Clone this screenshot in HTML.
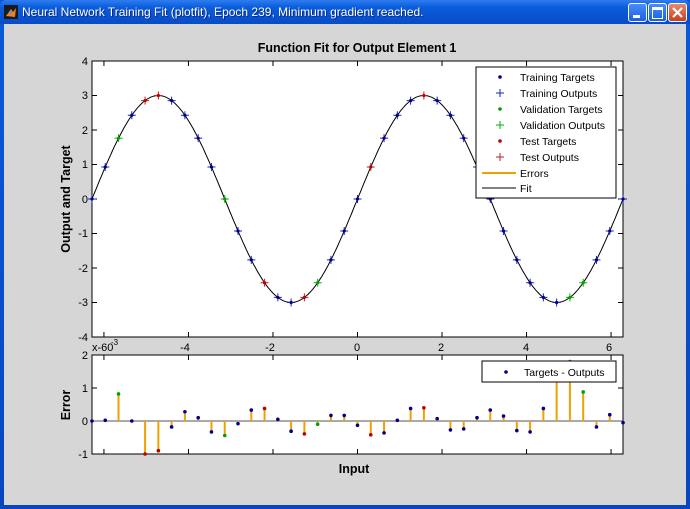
<!DOCTYPE html>
<html><head><meta charset="utf-8"><style>
html,body{margin:0;padding:0;width:690px;height:509px;overflow:hidden;background:#0b4fd0}
#win{position:absolute;left:0;top:0;width:690px;height:509px;background:linear-gradient(#0a5ad8,#0846c0)}
#tb{position:absolute;left:0;top:0;width:690px;height:24px;background:linear-gradient(#2f7cf0 0%,#0a5ddc 30%,#0853d2 70%,#0a4cc4 100%);border-radius:6px 6px 0 0}
#tt{position:absolute;left:22px;top:5px;color:#fff;font:12px "Liberation Sans",sans-serif;text-shadow:1px 1px #0a2a80}
.btn{position:absolute;top:3px;width:19px;height:19px;border:1px solid #fff;border-radius:3px;background:linear-gradient(#4a8cf8,#1a5ee8);box-sizing:border-box}
#client{position:absolute;left:4px;top:24px;width:682px;height:481px;background:#d6d6d6}
svg text{font-family:"Liberation Sans",Arial,sans-serif}
</style></head><body>
<div id="win">
<div id="tb">
<svg style="position:absolute;left:4px;top:5px" width="14" height="14"><rect width="14" height="14" fill="#1a1a1a"/><path d="M2 11 L7 4 L9 7 L12 3 L11 12 Z" fill="#f08020"/><path d="M5 9 L7 5 L8 9Z" fill="#3aa0ff"/></svg>
<div id="tt">Neural Network Training Fit (plotfit), Epoch 239, Minimum gradient reached.</div>
<div class="btn" style="left:628px"><div style="position:absolute;left:4px;top:11px;width:7px;height:3px;background:#fff"></div></div>
<div class="btn" style="left:648px"><div style="position:absolute;left:3px;top:3px;width:9px;height:8px;border:1px solid #fff;border-top:3px solid #fff"></div></div>
<div class="btn" style="left:668px;background:linear-gradient(#e88a70,#c8401c)"><svg width="17" height="17" style="position:absolute;left:0;top:0"><path d="M4 4 L13 13 M13 4 L4 13" stroke="#fff" stroke-width="2.2"/></svg></div>
</div>
<div id="client"></div>
</div>
<svg id="s" style="position:absolute;left:0;top:0" width="690" height="509">
<rect x="92" y="61" width="531" height="276" fill="#fff" stroke="#000"/>
<rect x="92" y="355" width="531" height="99" fill="#fff" stroke="#000"/>
<g id="ticks" stroke="#000" stroke-width="1"></g>
<path id="curve" fill="none" stroke="#000" stroke-width="1"/>
<line x1="92" y1="421" x2="623" y2="421" stroke="#555" stroke-width="1"/>
<g id="stems"></g>
<g id="marks"></g>
<text x="357" y="52" font-size="12.5" font-weight="bold" text-anchor="middle">Function Fit for Output Element 1</text>
<g font-size="11" text-anchor="end">
<text x="88" y="65">4</text><text x="88" y="99">3</text><text x="88" y="134">2</text><text x="88" y="168">1</text><text x="88" y="203">0</text><text x="88" y="237">-1</text><text x="88" y="272">-2</text><text x="88" y="306">-3</text><text x="88" y="341">-4</text>
<text x="88" y="359">2</text><text x="88" y="392">1</text><text x="88" y="425">0</text><text x="88" y="458">-1</text>
</g>
<g font-size="11" text-anchor="middle">
<text x="185" y="351">-4</text><text x="270" y="351">-2</text><text x="357" y="351">0</text><text x="441" y="351">2</text><text x="526" y="351">4</text><text x="609" y="351">6</text>
</g>
<text x="92" y="351" font-size="11">x-60</text><text x="111" y="345" font-size="8">-3</text>
<text transform="translate(70,199) rotate(-90)" font-size="12.5" font-weight="bold" text-anchor="middle">Output and Target</text>
<text transform="translate(70,405) rotate(-90)" font-size="12.5" font-weight="bold" text-anchor="middle">Error</text>
<text x="354" y="473" font-size="12.5" font-weight="bold" text-anchor="middle">Input</text>
<rect x="476" y="67" width="140" height="131" fill="#fff" stroke="#000"/>
<g font-size="10.5">
<text x="520" y="81">Training Targets</text>
<text x="520" y="97">Training Outputs</text>
<text x="520" y="113">Validation Targets</text>
<text x="520" y="129">Validation Outputs</text>
<text x="520" y="145">Test Targets</text>
<text x="520" y="161">Test Outputs</text>
<text x="520" y="177">Errors</text>
<text x="520" y="192">Fit</text>
</g>
<circle cx="500" cy="77" r="1.8" fill="#00008b"/>
<path d="M496 93h8M500 89v8" stroke="#2020c0"/>
<circle cx="500" cy="109" r="1.8" fill="#00a000"/>
<path d="M496 125h8M500 121v8" stroke="#00b000"/>
<circle cx="500" cy="141" r="1.8" fill="#c00000"/>
<path d="M496 157h8M500 153v8" stroke="#c02020"/>
<line x1="482" y1="173" x2="516" y2="173" stroke="#f0a000" stroke-width="2"/>
<line x1="482" y1="188" x2="516" y2="188" stroke="#000"/>
<rect x="482" y="361" width="134" height="21" fill="#fff" stroke="#000"/>
<circle cx="506" cy="372" r="1.8" fill="#00008b"/>
<text x="524" y="376" font-size="10.5">Targets - Outputs</text>
</svg>
<script>
var ns="http://www.w3.org/2000/svg";
function el(p,t,a){var e=document.createElementNS(ns,t);for(var k in a)e.setAttribute(k,a[k]);document.getElementById(p).appendChild(e);return e;}
var X=function(v){return 357.5+v*42.26};
var d="";for(var i=0;i<=400;i++){var v=-2*Math.PI+i*4*Math.PI/400;d+=(i?"L":"M")+X(v).toFixed(1)+" "+(199-3*Math.sin(v)*34.5).toFixed(1);}
document.getElementById("curve").setAttribute("d",d);
// ticks
[-6,-4,-2,0,2,4,6].forEach(function(v){var x=X(v);
el("ticks","line",{x1:x,y1:61,x2:x,y2:66});el("ticks","line",{x1:x,y1:337,x2:x,y2:332});
el("ticks","line",{x1:x,y1:355,x2:x,y2:360});el("ticks","line",{x1:x,y1:454,x2:x,y2:449});});
for(var k=-4;k<=4;k++){var y=199-k*34.5;el("ticks","line",{x1:92,y1:y,x2:97,y2:y});el("ticks","line",{x1:623,y1:y,x2:618,y2:y});}
for(var k=-1;k<=2;k++){var y=421-k*33;el("ticks","line",{x1:92,y1:y,x2:97,y2:y});el("ticks","line",{x1:623,y1:y,x2:618,y2:y});}
var col="bbgbrrbbbbgbbrbbrgbbbrbbbrbbbbbbbbbbggbbb";
var err=[0,.02,.82,0,-1,-.9,-.18,.28,.1,-.33,-.44,-.08,.33,.38,.05,-.31,-.39,-.1,.17,.17,-.13,-.42,-.36,.02,.38,.4,.07,-.27,-.24,.1,.33,.15,-.29,-.33,.38,1.5,1.8,.88,-.18,.19,-.05];
var C={b:["#00008b","#2020c0"],g:["#00a000","#00b000"],r:["#c00000","#c02020"]};
for(var i=0;i<=40;i++){var v=-2*Math.PI+i*Math.PI/10,x=X(v),y=199-3*Math.sin(v)*34.5,c=C[col[i]];
el("marks","path",{d:"M"+(x-4)+" "+y+"h8M"+x+" "+(y-4)+"v8",stroke:c[1],"stroke-width":1});
el("marks","circle",{cx:x,cy:y,r:1.6,fill:c[0]});
var ey=421-err[i]*33;
if(i==35)ey=382;
el("stems","line",{x1:x,y1:421,x2:x,y2:ey,stroke:"#f0a000","stroke-width":2});
if(i!=35)el("marks","circle",{cx:x,cy:421-err[i]*33,r:1.8,fill:c[0]});}
</script>
</body></html>
